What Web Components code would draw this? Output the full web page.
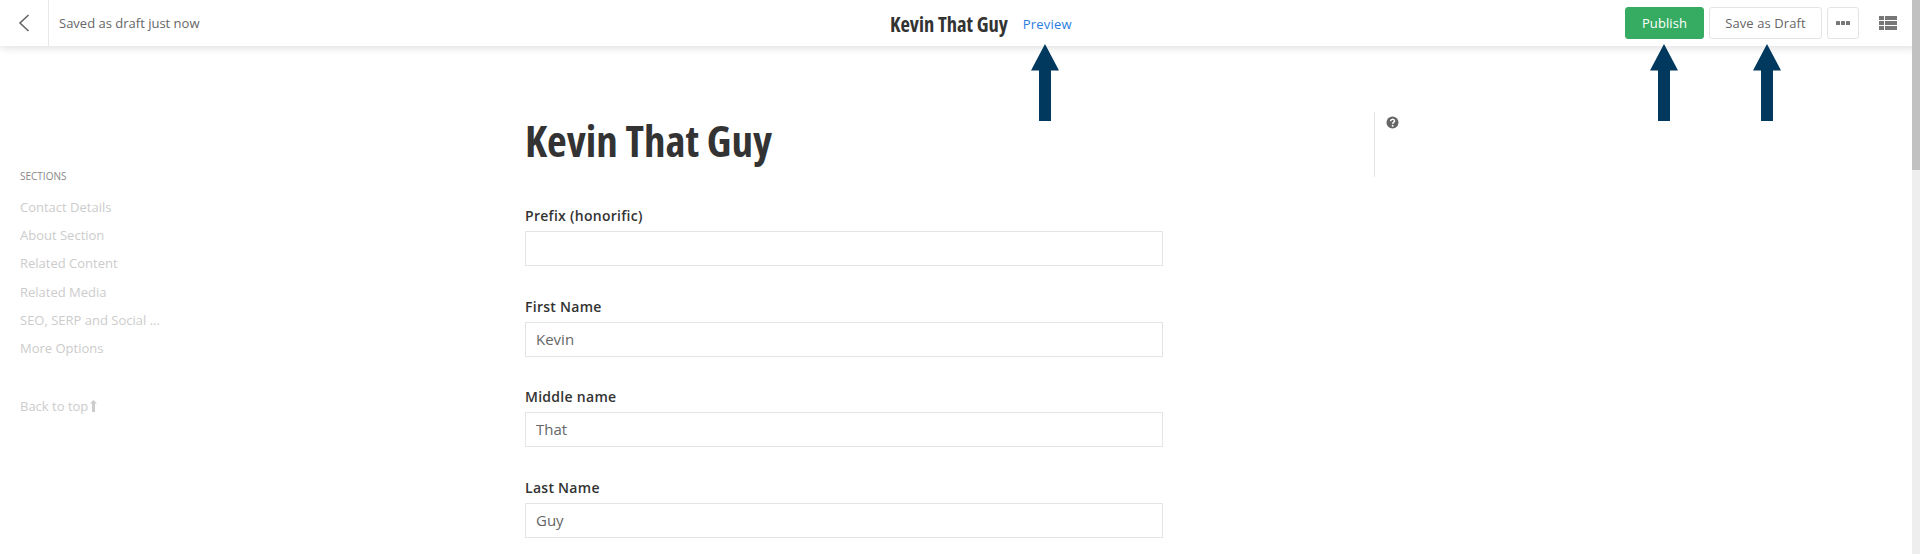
<!DOCTYPE html>
<html>
<head>
<meta charset="utf-8">
<title>Kevin That Guy</title>
<style>
  html, body { margin: 0; height: 100%; overflow: hidden; background: #fff; }
  body { font-family: "Open Sans", sans-serif; color: #333; }
</style>
</head>
<body>
<edit-page>
  <top-bar slot="top" title-text="Kevin That Guy"></top-bar>
  <section-nav slot="nav"></section-nav>
  <h1-title slot="main">Kevin That Guy</h1-title>
  <form-field slot="main" label="Prefix (honorific)"></form-field>
  <form-field slot="main" label="First Name">Kevin</form-field>
  <form-field slot="main" label="Middle name">That</form-field>
  <form-field slot="main" label="Last Name">Guy</form-field>
  <help-rail slot="help"></help-rail>
</edit-page>
<up-arrow style="left:1031px"></up-arrow>
<up-arrow style="left:1650px"></up-arrow>
<up-arrow style="left:1753px"></up-arrow>
<page-scroll></page-scroll>

<script>
class EditPage extends HTMLElement {
  constructor() {
    super();
    this.attachShadow({ mode: 'open' });
    this.shadowRoot.innerHTML = `
    <style>
      :host { display: block; height: 554px; overflow: hidden; }
      #body { display: grid; grid-template-columns: 525px 638px 211px 1fr; }
      #nav { padding-top: 121px; }
      #main { padding-top: 68px; }
      #help { padding-top: 66px; grid-column: 4; }
    </style>
    <slot name="top"></slot>
    <div id="body">
      <div id="nav"><slot name="nav"></slot></div>
      <div id="main"><slot name="main"></slot></div>
      <div id="help"><slot name="help"></slot></div>
    </div>`;
  }
}

class TopBar extends HTMLElement {
  constructor() {
    super();
    this.attachShadow({ mode: 'open' });
  }
  connectedCallback() {
    this.shadowRoot.innerHTML = `
    <style>
      :host { display: flex; align-items: stretch; height: 46px; background: #fff;
              box-shadow: 0 2px 8px rgba(0,0,0,.13); position: relative; z-index: 1; }
      #back { width: 48px; border-right: 1px solid #e8e8e8; display: flex; align-items: center; justify-content: center; }
      #saved { width: 180px; padding-left: 10px; font-size: 13px; line-height: 46px; color: #666; white-space: nowrap; }
      #center { margin-left: 651px; display: flex; align-items: center; width: 400px; padding-top: 1px; }
      #name { font-size: 20.5px; font-weight: 700; font-stretch: 75%; color: #333; white-space: nowrap; }
      #preview { font-size: 13px; color: #2a7de1; margin-left: 15px; letter-spacing: .2px; }
      #actions { margin-left: auto; display: flex; align-items: center; gap: 5px; margin-right: 23px; }
      button { font-family: inherit; font-size: 13px; height: 32px; border-radius: 3px; background: #fff; border: 1px solid #e4e4e4; color: #666; padding: 0; letter-spacing: .1px; }
      #publish { width: 79px; background: #36ac63; border-color: #36ac63; color: #fff; font-weight: 500; }
      #draft { width: 113px; }
      #more { width: 32px; display: flex; align-items: center; justify-content: center; }
      #list { margin-left: 15px; display: block; }
    </style>
    <div id="back">
      <svg width="12" height="18" viewBox="0 0 12 18"><path d="M10.5 1 2 9l8.5 8" fill="none" stroke="#666" stroke-width="1.6"/></svg>
    </div>
    <div id="saved">Saved as draft just now</div>
    <div id="center">
      <span id="name">${this.getAttribute('title-text')}</span>
      <span id="preview">Preview</span>
    </div>
    <div id="actions">
      <button id="publish">Publish</button>
      <button id="draft">Save as Draft</button>
      <button id="more">
        <svg width="14" height="4" viewBox="0 0 14 4" fill="#777"><rect width="4" height="4" rx=".6"/><rect x="5" width="4" height="4" rx=".6"/><rect x="10" width="4" height="4" rx=".6"/></svg>
      </button>
      <svg id="list" width="18" height="14" viewBox="0 0 18 14" fill="#777">
        <rect width="5" height="4"/><rect x="6" width="12" height="4"/>
        <rect y="5" width="5" height="4"/><rect x="6" y="5" width="12" height="4"/>
        <rect y="10" width="5" height="4"/><rect x="6" y="10" width="12" height="4"/>
      </svg>
    </div>`;
  }
}

class SectionNav extends HTMLElement {
  constructor() {
    super();
    this.attachShadow({ mode: 'open' });
    const items = ['Contact Details', 'About Section', 'Related Content', 'Related Media', 'SEO, SERP and Social ...', 'More Options'];
    this.shadowRoot.innerHTML = `
    <style>
      :host { display: block; padding-left: 20px; }
      h4 { margin: 0 0 8px; font-size: 10px; line-height: 18px; font-weight: 400; color: #888; }
      a { display: block; font-size: 13px; line-height: 28.2px; color: #ccc; }
      #top { margin-top: 30px; display: flex; align-items: center; gap: 2px; }
    </style>
    <h4>SECTIONS</h4>
    ${items.map(i => `<a>${i}</a>`).join('')}
    <a id="top">Back to top
      <svg width="7" height="12" viewBox="0 0 7 12" fill="#ccc"><path d="M3.500 0 7 3.500H5V12H2V3.500H0Z"/></svg>
    </a>`;
  }
}

class H1Title extends HTMLElement {
  constructor() {
    super();
    this.attachShadow({ mode: 'open' });
    this.shadowRoot.innerHTML = `
    <style>
      :host { display: block; font-size: 43px; line-height: 54px; font-weight: 700; font-stretch: 75%; color: #333; margin-bottom: 39px; }
    </style>
    <slot></slot>`;
  }
}

class FormField extends HTMLElement {
  constructor() {
    super();
    this.attachShadow({ mode: 'open' });
  }
  connectedCallback() {
    this.shadowRoot.innerHTML = `
    <style>
      :host { display: block; margin-bottom: 31.67px; }
      label { display: block; font-size: 14px; font-weight: 600; letter-spacing: .28px; line-height: 18px; color: #333; margin-bottom: 6px; }
      #box { box-sizing: border-box; height: 35px; border: 1px solid #e4e4e4; padding: 0 10px; font-size: 15px; line-height: 33px; color: #666; }
    </style>
    <label>${this.getAttribute('label')}</label>
    <div id="box"><slot></slot></div>`;
  }
}

class HelpRail extends HTMLElement {
  constructor() {
    super();
    this.attachShadow({ mode: 'open' });
    this.shadowRoot.innerHTML = `
    <style>
      :host { display: block; width: 40px; height: 65px; box-sizing: border-box; border-left: 1px solid #e4e4e4; padding: 4px 0 0 11px; }
      svg { display: block; }
    </style>
    <svg width="13" height="13" viewBox="0 0 13 13">
      <circle cx="6.500" cy="6.500" r="6" fill="#666"/>
      <path d="M4.600 5.200c0-2.400 3.900-2.400 3.900-.2 0 1.300-1.900 1.400-1.900 2.800" fill="none" stroke="#fff" stroke-width="1.500"/>
      <rect x="5.800" y="8.900" width="1.700" height="1.700" fill="#fff"/>
    </svg>`;
  }
}

class UpArrow extends HTMLElement {
  constructor() {
    super();
    this.attachShadow({ mode: 'open' });
    this.shadowRoot.innerHTML = `
    <style>
      :host { position: absolute; top: 44px; width: 28px; height: 77px; z-index: 2; display: block; }
      svg { display: block; }
    </style>
    <svg width="28" height="77" viewBox="0 0 28 77"><path d="M14 0 28 26.500H20V77H8V26.500H0Z" fill="#00395d"/></svg>`;
  }
}

class PageScroll extends HTMLElement {
  constructor() {
    super();
    this.attachShadow({ mode: 'open' });
    this.shadowRoot.innerHTML = `
    <style>
      :host { position: absolute; top: 0; right: 0; bottom: 0; width: 8px; background: #eeeeee; z-index: 3; display: block; }
      #thumb { height: 170px; background: #c1c1c1; }
    </style>
    <div id="thumb"></div>`;
  }
}

customElements.define('edit-page', EditPage);
customElements.define('top-bar', TopBar);
customElements.define('section-nav', SectionNav);
customElements.define('h1-title', H1Title);
customElements.define('form-field', FormField);
customElements.define('help-rail', HelpRail);
customElements.define('up-arrow', UpArrow);
customElements.define('page-scroll', PageScroll);
</script>
</body>
</html>
